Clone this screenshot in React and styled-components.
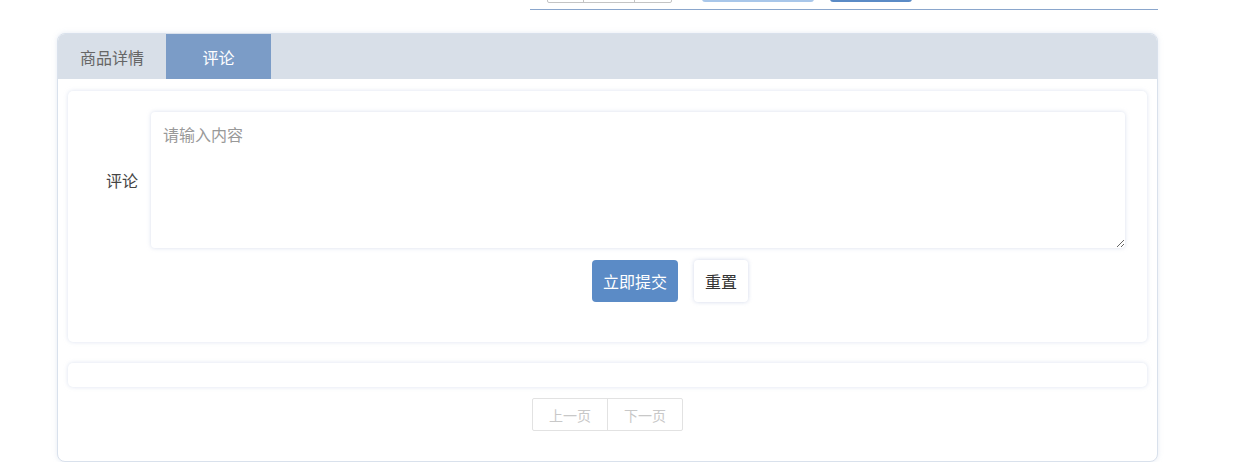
import React from 'react'
import styled, { createGlobalStyle } from 'styled-components'

const Global = createGlobalStyle`
  body {
    margin: 0;
    background: #fff;
    font-family: "Noto Sans CJK SC", "Noto Sans", sans-serif;
  }
`

const Page = styled.div`
  width: 1101px;
  margin-left: 57px;
`

const TopStrip = styled.div`
  margin-left: 473px;
  height: 9px;
  border-bottom: 1px solid #8aa6cc;
  position: relative;
`

const Stepper = styled.div`
  position: absolute;
  top: -20px;
  left: ${p => p.x}px;
  display: flex;
  height: 21px;
  border: 1px solid #c4c4c4;
  border-radius: 2px;
`

const StepCell = styled.div`
  width: ${p => p.w}px;
  & + & {
    border-left: 1px solid #c4c4c4;
  }
`

const TopButton = styled.div`
  position: absolute;
  top: -20px;
  left: ${p => p.x}px;
  width: ${p => p.w}px;
  height: 22px;
  border-radius: 3px;
  background: ${p => p.bg};
`

const Card = styled.div`
  margin-top: 23px;
  border: 1px solid #d9e1ec;
  border-radius: 8px;
  box-shadow: 0 0 5px rgba(180, 195, 220, 0.35);
  overflow: hidden;
  background: #fff;
`

const TabBar = styled.div`
  display: flex;
  height: 45px;
  background: #d8dfe8;
`

const Tab = styled.div`
  display: flex;
  align-items: center;
  justify-content: center;
  min-width: ${p => p.w}px;
  font-size: 16px;
  color: ${p => (p.active ? '#fff' : '#666')};
  background: ${p => (p.active ? '#7b9cc7' : 'transparent')};
`

const Body = styled.div`
  padding: 12px 10px 30px;
`

const Panel = styled.div`
  background: #fff;
  border-radius: 5px;
  box-shadow: 0 0 4px rgba(190, 200, 225, 0.55);
`

const FormPanel = styled(Panel)`
  padding: 21px 22px 40px 0;
`

const FormRow = styled.div`
  display: flex;
  align-items: center;
`

const Label = styled.label`
  width: 70px;
  padding-right: 13px;
  text-align: right;
  font-size: 16px;
  color: #444;
`

const TextArea = styled.textarea`
  flex: 1;
  height: 136px;
  box-sizing: border-box;
  border: none;
  outline: none;
  border-radius: 4px;
  padding: 10px 12px;
  font-family: inherit;
  font-size: 16px;
  color: #333;
  box-shadow: 0 0 4px rgba(190, 200, 225, 0.6);
  &::placeholder {
    color: #999;
  }
`

const Actions = styled.div`
  display: flex;
  gap: 16px;
  margin-top: 12px;
  padding-left: 524px;
`

const Button = styled.button`
  height: 42px;
  padding: 0 11px;
  border: none;
  border-radius: 4px;
  font-family: inherit;
  font-size: 16px;
  color: ${p => (p.primary ? '#fff' : '#333')};
  background: ${p => (p.primary ? '#5b8bc6' : '#fff')};
  box-shadow: ${p => (p.primary ? 'none' : '0 0 4px rgba(190, 200, 225, 0.7)')};
`

const EmptyPanel = styled(Panel)`
  height: 24px;
  margin-top: 21px;
`

const Pager = styled.div`
  display: flex;
  justify-content: center;
  margin-top: 11px;
`

const PagerGroup = styled.div`
  display: flex;
  border: 1px solid #e2e2e2;
  border-radius: 2px;
`

const PageButton = styled.div`
  width: 74px;
  height: 31px;
  display: flex;
  align-items: center;
  justify-content: center;
  font-size: 14px;
  color: #c8c8c8;
  & + & {
    border-left: 1px solid #e2e2e2;
  }
`

export default function App() {
  return (
    <Page>
      <Global />
      <TopStrip>
        <Stepper x={17}>
          <StepCell w={35} />
          <StepCell w={50} />
          <StepCell w={36} />
        </Stepper>
        <TopButton x={172} w={112} bg="#a9c7ea" />
        <TopButton x={300} w={82} bg="#5b8bc6" />
      </TopStrip>
      <Card>
        <TabBar>
          <Tab w={108}>商品详情</Tab>
          <Tab w={105} active>评论</Tab>
        </TabBar>
        <Body>
          <FormPanel>
            <FormRow>
              <Label>评论</Label>
              <TextArea placeholder="请输入内容" />
            </FormRow>
            <Actions>
              <Button primary>立即提交</Button>
              <Button>重置</Button>
            </Actions>
          </FormPanel>
          <EmptyPanel />
          <Pager>
            <PagerGroup>
              <PageButton>上一页</PageButton>
              <PageButton>下一页</PageButton>
            </PagerGroup>
          </Pager>
        </Body>
      </Card>
    </Page>
  )
}
